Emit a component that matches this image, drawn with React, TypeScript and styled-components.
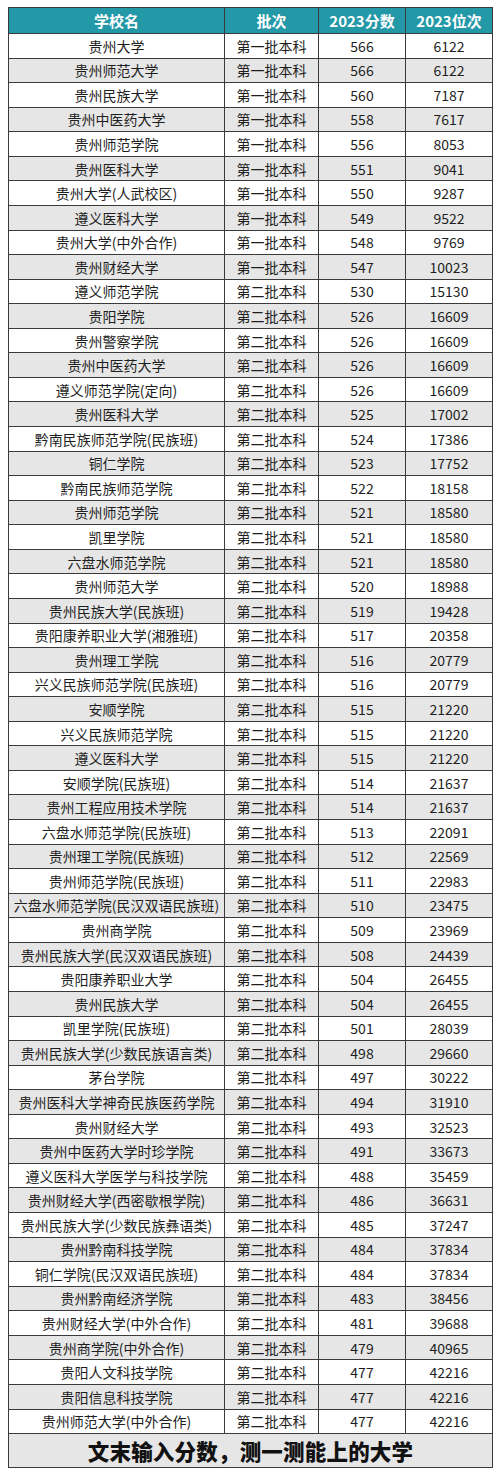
import React from "react";
import styled, { createGlobalStyle } from "styled-components";

type Row = [string, string, number, number];

const FIRST = "第一批本科";
const SECOND = "第二批本科";

const rows: Row[] = [
  ["贵州大学", FIRST, 566, 6122],
  ["贵州师范大学", FIRST, 566, 6122],
  ["贵州民族大学", FIRST, 560, 7187],
  ["贵州中医药大学", FIRST, 558, 7617],
  ["贵州师范学院", FIRST, 556, 8053],
  ["贵州医科大学", FIRST, 551, 9041],
  ["贵州大学(人武校区)", FIRST, 550, 9287],
  ["遵义医科大学", FIRST, 549, 9522],
  ["贵州大学(中外合作)", FIRST, 548, 9769],
  ["贵州财经大学", FIRST, 547, 10023],
  ["遵义师范学院", SECOND, 530, 15130],
  ["贵阳学院", SECOND, 526, 16609],
  ["贵州警察学院", SECOND, 526, 16609],
  ["贵州中医药大学", SECOND, 526, 16609],
  ["遵义师范学院(定向)", SECOND, 526, 16609],
  ["贵州医科大学", SECOND, 525, 17002],
  ["黔南民族师范学院(民族班)", SECOND, 524, 17386],
  ["铜仁学院", SECOND, 523, 17752],
  ["黔南民族师范学院", SECOND, 522, 18158],
  ["贵州师范学院", SECOND, 521, 18580],
  ["凯里学院", SECOND, 521, 18580],
  ["六盘水师范学院", SECOND, 521, 18580],
  ["贵州师范大学", SECOND, 520, 18988],
  ["贵州民族大学(民族班)", SECOND, 519, 19428],
  ["贵阳康养职业大学(湘雅班)", SECOND, 517, 20358],
  ["贵州理工学院", SECOND, 516, 20779],
  ["兴义民族师范学院(民族班)", SECOND, 516, 20779],
  ["安顺学院", SECOND, 515, 21220],
  ["兴义民族师范学院", SECOND, 515, 21220],
  ["遵义医科大学", SECOND, 515, 21220],
  ["安顺学院(民族班)", SECOND, 514, 21637],
  ["贵州工程应用技术学院", SECOND, 514, 21637],
  ["六盘水师范学院(民族班)", SECOND, 513, 22091],
  ["贵州理工学院(民族班)", SECOND, 512, 22569],
  ["贵州师范学院(民族班)", SECOND, 511, 22983],
  ["六盘水师范学院(民汉双语民族班)", SECOND, 510, 23475],
  ["贵州商学院", SECOND, 509, 23969],
  ["贵州民族大学(民汉双语民族班)", SECOND, 508, 24439],
  ["贵阳康养职业大学", SECOND, 504, 26455],
  ["贵州民族大学", SECOND, 504, 26455],
  ["凯里学院(民族班)", SECOND, 501, 28039],
  ["贵州民族大学(少数民族语言类)", SECOND, 498, 29660],
  ["茅台学院", SECOND, 497, 30222],
  ["贵州医科大学神奇民族医药学院", SECOND, 494, 31910],
  ["贵州财经大学", SECOND, 493, 32523],
  ["贵州中医药大学时珍学院", SECOND, 491, 33673],
  ["遵义医科大学医学与科技学院", SECOND, 488, 35459],
  ["贵州财经大学(西密歇根学院)", SECOND, 486, 36631],
  ["贵州民族大学(少数民族彝语类)", SECOND, 485, 37247],
  ["贵州黔南科技学院", SECOND, 484, 37834],
  ["铜仁学院(民汉双语民族班)", SECOND, 484, 37834],
  ["贵州黔南经济学院", SECOND, 483, 38456],
  ["贵州财经大学(中外合作)", SECOND, 481, 39688],
  ["贵州商学院(中外合作)", SECOND, 479, 40965],
  ["贵阳人文科技学院", SECOND, 477, 42216],
  ["贵阳信息科技学院", SECOND, 477, 42216],
  ["贵州师范大学(中外合作)", SECOND, 477, 42216],
];

const GlobalStyle = createGlobalStyle`
  html, body {
    margin: 0;
    padding: 0;
    background: #ffffff;
  }
  body {
    font-family: "Noto Sans CJK SC", "Noto Sans", sans-serif;
  }
`;

const Page = styled.div`
  width: 500px;
  padding: 7px 8px 8px;
  box-sizing: border-box;
`;

const Table = styled.table`
  width: 484px;
  border-collapse: collapse;
  table-layout: fixed;
  border: 1.5px solid #3a3a3a;
`;

const HeadCell = styled.th`
  height: 25px;
  padding: 0;
  background: #2398a7;
  color: #ffffff;
  font-size: 15px;
  font-weight: 700;
  text-align: center;
  border: 1px solid #3a3a3a;
  line-height: 1;
`;

const BodyRow = styled.tr<{ $shaded: boolean }>`
  height: 24.57px;
  background: ${(p) => (p.$shaded ? "#e6e6e6" : "#ffffff")};
`;

const Cell = styled.td`
  padding: 0;
  color: #1e1e1e;
  font-size: 14px;
  text-align: center;
  white-space: nowrap;
  border: 1px solid #3a3a3a;
  line-height: 1;
`;

const FooterCell = styled.td`
  height: 33px;
  padding: 0;
  background: #e6e6e6;
  color: #111111;
  font-size: 21.5px;
  font-weight: 900;
  text-align: center;
  border: 1px solid #3a3a3a;
  line-height: 1;
  letter-spacing: 0.2px;
`;

export default function App() {
  return (
    <Page>
      <GlobalStyle />
      <Table>
        <colgroup>
          <col style={{ width: 216 }} />
          <col style={{ width: 94 }} />
          <col style={{ width: 87 }} />
          <col style={{ width: 87 }} />
        </colgroup>
        <thead>
          <tr>
            <HeadCell>学校名</HeadCell>
            <HeadCell>批次</HeadCell>
            <HeadCell>2023分数</HeadCell>
            <HeadCell>2023位次</HeadCell>
          </tr>
        </thead>
        <tbody>
          {rows.map(([name, batch, score, rank], i) => (
            <BodyRow key={i} $shaded={i % 2 === 1}>
              <Cell>{name}</Cell>
              <Cell>{batch}</Cell>
              <Cell>{score}</Cell>
              <Cell>{rank}</Cell>
            </BodyRow>
          ))}
        </tbody>
        <tfoot>
          <tr>
            <FooterCell colSpan={4}>文末输入分数，测一测能上的大学</FooterCell>
          </tr>
        </tfoot>
      </Table>
    </Page>
  );
}
